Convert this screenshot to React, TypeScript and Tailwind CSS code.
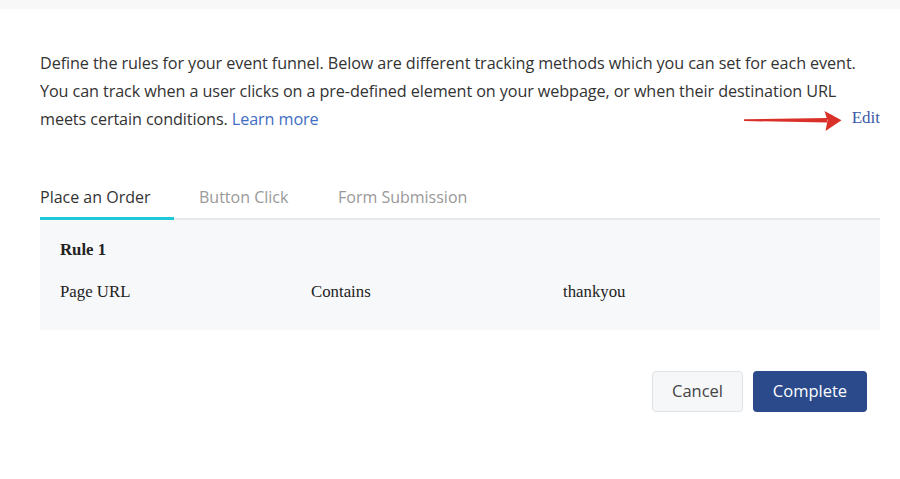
import React, { useState } from "react";

const TABS = ["Place an Order", "Button Click", "Form Submission"];

const TAB_WIDTH: Record<number, string> = {
  0: "w-[134px] mr-[25px]",
  1: "w-[139px]",
  2: "",
};

export default function App() {
  const [active, setActive] = useState(0);

  return (
    <div className="min-h-[479px] w-[900px] bg-white font-['Open_Sans',sans-serif]">
      {/* top strip */}
      <div className="h-[9px] bg-[#f8f8f8]" />

      <div className="pl-10 pr-5 pt-10">
        {/* ── Intro ─────────────────────────────── */}
        <div className="relative">
          <p className="text-[16.2px] leading-[28px] text-[#333] tracking-[-0.1px]">
            Define the rules for your event funnel. Below are different tracking methods which you can set for each event.
            <br />
            You can track when a user clicks on a pre-defined element on your webpage, or when their destination URL
            <br />
            meets certain conditions. <a className="text-[#3f6ec3]">Learn more</a>
          </p>

          {/* annotation arrow */}
          <svg
            className="absolute left-[703px] top-[61px]"
            width="100"
            height="22"
            viewBox="0 0 100 22"
          >
            <path d="M1 9.2 L84 8 L84 12.6 L1 11 Z" fill="#d9302a" />
            <path d="M81.5 1 L98.5 10.2 L82.5 21 L84.5 10.5 Z" fill="#d9302a" />
          </svg>

          <a className="absolute right-0 top-[57px] font-['Liberation_Serif',serif] text-[17px] leading-[24px] text-[#3a5aa8]">
            Edit
          </a>
        </div>

        {/* ── Tabs ──────────────────────────────── */}
        <div className="mt-[52px] flex border-b-2 border-[#e6eaef]">
          {TABS.map((t, i) => (
            <button
              key={t}
              onClick={() => setActive(i)}
              className={`-mb-[2px] pb-[8px] text-left text-[16px] leading-[24px] border-b-[3px] ${TAB_WIDTH[i]} ${
                active === i ? "border-[#1fc8d6] text-[#333]" : "border-transparent text-[#999]"
              }`}
            >
              {t}
            </button>
          ))}
        </div>

        {/* ── Rule panel ────────────────────────── */}
        <div className="bg-[#f7f8fa] px-5 pt-[18px] pb-[26px] font-['Liberation_Serif',serif] text-[16.8px] leading-[24px] text-[#222]">
          <div className="font-bold">Rule 1</div>
          <div className="mt-[18px] grid grid-cols-[251px_252px_1fr]">
            <span>Page URL</span>
            <span>Contains</span>
            <span>thankyou</span>
          </div>
        </div>

        {/* ── Actions ───────────────────────────── */}
        <div className="mt-[41px] mr-[13px] flex justify-end gap-[10px]">
          <button className="h-[41px] w-[91px] rounded-[4px] border border-[#dfe2e6] bg-[#f6f7f9] text-[16.5px] text-[#444]">
            Cancel
          </button>
          <button className="h-[41px] w-[114px] rounded-[4px] bg-[#2a4a8c] text-[16.5px] text-white">
            Complete
          </button>
        </div>
      </div>
    </div>
  );
}
